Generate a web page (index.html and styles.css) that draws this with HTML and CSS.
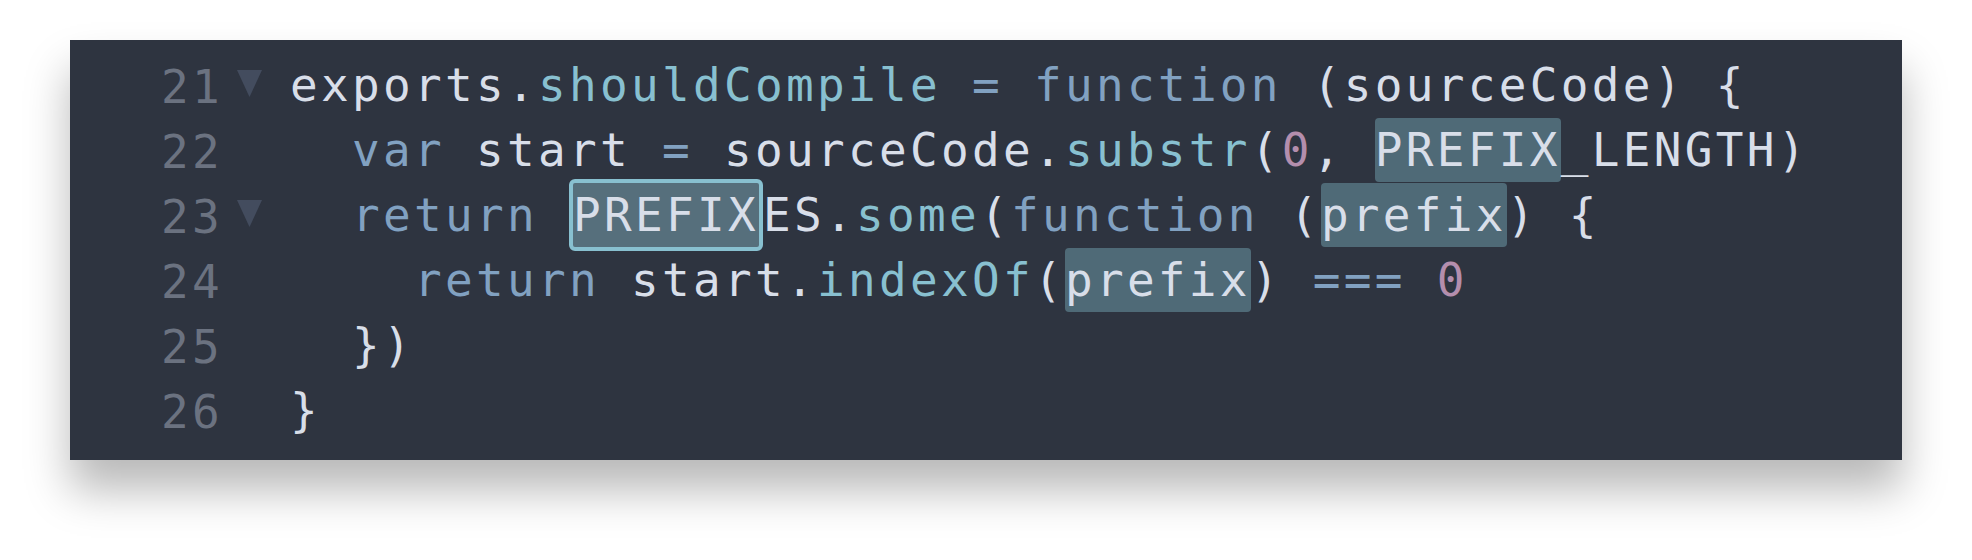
FILE: index.html
```html
<!DOCTYPE html>
<html>
<head>
<meta charset="utf-8">
<link rel="stylesheet" href="styles.css">
</head>
<body>
<div class="stage">
  <div class="editor">
    <div class="row">
      <span class="ln">21</span>
      <span class="fold"><svg class="tri" viewBox="0 0 25 27" width="25" height="27"><polygon points="0,0 25,0 12.5,27" fill="#434c5e"/></svg></span>
      <span class="code">exports.<span class="fn">shouldCompile</span> <span class="kw">=</span> <span class="kw">function</span> (sourceCode) {</span>
    </div>
    <div class="row">
      <span class="ln">22</span>
      <span class="fold"></span>
      <span class="code">  <span class="kw">var</span> start <span class="kw">=</span> sourceCode.<span class="fn">substr</span>(<span class="num">0</span>, <span class="hl">PREFIX</span>_LENGTH)</span>
    </div>
    <div class="row">
      <span class="ln">23</span>
      <span class="fold"><svg class="tri" viewBox="0 0 25 27" width="25" height="27"><polygon points="0,0 25,0 12.5,27" fill="#434c5e"/></svg></span>
      <span class="code">  <span class="kw">return</span> <span class="hl cur">PREFIX</span>ES.<span class="fn">some</span>(<span class="kw">function</span> (<span class="hl">prefix</span>) {</span>
    </div>
    <div class="row">
      <span class="ln">24</span>
      <span class="fold"></span>
      <span class="code">    <span class="kw">return</span> start.<span class="fn">indexOf</span>(<span class="hl">prefix</span>) <span class="kw">===</span> <span class="num">0</span></span>
    </div>
    <div class="row">
      <span class="ln">25</span>
      <span class="fold"></span>
      <span class="code">  })</span>
    </div>
    <div class="row">
      <span class="ln">26</span>
      <span class="fold"></span>
      <span class="code">}</span>
    </div>
  </div>
</div>
</body>
</html>
```

FILE: styles.css
```css
html, body {
  margin: 0;
  padding: 0;
  background: #ffffff;
}

.stage {
  padding: 40px 70px 100px 70px;
}

.editor {
  background: #2e3440;
  height: 420px;
  box-sizing: border-box;
  padding-top: 13px;
  box-shadow: 0 30px 42px rgba(0, 0, 0, 0.28);
  font-family: "DejaVu Sans Mono", "Liberation Mono", monospace;
  font-size: 46px;
  letter-spacing: 3.3px;
  color: #d8dee9;
}

.row {
  display: flex;
  height: 65px;
  line-height: 65px;
}

.ln {
  width: 153px;
  text-align: right;
  color: #6b7280;
  flex: none;
  position: relative;
  top: 2px;
}

.fold {
  width: 67px;
  flex: none;
  display: flex;
  align-items: flex-start;
  padding-left: 14px;
  box-sizing: border-box;
}

.tri {
  display: block;
  margin-top: 17px;
}

.code {
  white-space: pre;
  flex: none;
  position: relative;
}

.fn {
  color: #88c0d0;
}

.kw {
  color: #81a1c1;
}

.num {
  color: #b48ead;
}

.hl {
  display: inline-block;
  vertical-align: top;
  height: 64px;
  line-height: 65px;
  background: #4f6a77;
  border-radius: 4px;
}

.hl.cur {
  background: #566f7c;
  border: 4px solid #88c0d0;
  border-radius: 6px;
  margin: -4px 0;
  line-height: 65px;
}
```
